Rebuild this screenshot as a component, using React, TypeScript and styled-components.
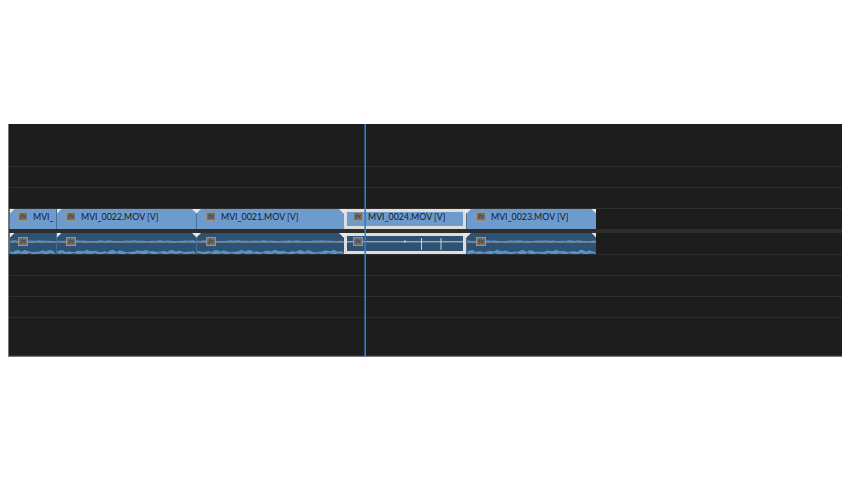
import React from 'react';
import styled, { createGlobalStyle } from 'styled-components';

const GlobalStyle = createGlobalStyle`
  html, body {
    margin: 0;
    padding: 0;
    background: #fff;
    font-family: "Liberation Sans", Arial, sans-serif;
  }
`;

const Page = styled.div`
  width: 850px;
  height: 480px;
  padding: 124px 8px 0;
  box-sizing: border-box;
`;

const Timeline = styled.div`
  position: relative;
  width: 834px;
  height: 232px;
  box-sizing: border-box;
  background: #1d1d1d;
  border-left: 1px solid #777;
  display: flex;
  flex-direction: column;
`;

const Track = styled.div<{ $h: number }>`
  height: ${(p) => p.$h}px;
  flex: none;
  box-sizing: border-box;
  border-bottom: 1px solid #2e2e2e;
  display: flex;
`;

const VideoTrack = styled(Track)`
  border-bottom: none;
`;

const Divider = styled.div`
  height: 4px;
  flex: none;
  background: #2d2d2d;
`;

const Clip = styled.div<{ $w: number; $selected?: boolean }>`
  position: relative;
  width: ${(p) => p.$w}px;
  flex: none;
  box-sizing: border-box;
  display: flex;
  align-items: flex-start;
  border-left: 1px solid #4a6f96;
  padding-left: ${(p) => (p.$selected ? 6 : 9)}px;
  ${(p) => p.$selected && 'border: 3px solid #e0dedb;'}

  &:first-child {
    padding-left: 8px;
  }
`;

const VideoClip = styled(Clip)`
  background: #6e9bce;
  gap: 5px;
  height: 20px;
  padding-top: ${(p) => (p.$selected ? 0 : 3)}px;
`;

const AudioClip = styled(Clip)`
  background: #2f5273;
  height: 21px;
  padding-top: ${(p) => (p.$selected ? 1 : 4)}px;
`;

const Label = styled.span`
  font-family: Lato, "Liberation Sans", sans-serif;
  font-size: 8.8px;
  line-height: 9px;
  color: #0e1a28;
  white-space: nowrap;
`;

const FxBadge = styled.span`
  position: relative;
  z-index: 2;
  flex: none;
  box-sizing: border-box;
  width: 10px;
  height: 9px;
  background: #6f6f6f;
  border: 1px solid #949494;
  color: #2e2e2e;
  font-family: "Liberation Serif", serif;
  font-size: 7px;
  font-style: italic;
  line-height: 7px;
  text-align: center;
  overflow: hidden;
`;

const Notch = styled.svg<{ $side: 'left' | 'right' | 'center'; $selected?: boolean }>`
  position: absolute;
  top: ${(p) => (p.$selected ? -3 : 0)}px;
  z-index: 3;
  ${(p) =>
    p.$side === 'left'
      ? 'left: 0;'
      : p.$side === 'right'
        ? 'right: 0;'
        : `left: ${p.$selected ? -8 : -5}px;`}
`;

const Wave = styled.svg`
  position: absolute;
  left: 0;
  top: 0;
  width: 100%;
  height: 100%;
`;

const Playhead = styled.div`
  position: absolute;
  left: 356px;
  top: 0;
  bottom: 0;
  width: 1px;
  background: #2f7bd6;
  box-shadow: -1px 0 0 rgba(47, 123, 214, 0.6);
  z-index: 5;
`;

const BottomEdge = styled.div`
  position: absolute;
  left: -1px;
  right: 0;
  bottom: -1px;
  height: 1px;
  background: #7c7c7c;
`;

const clips = [
  { name: 'MVI_', width: 47 },
  { name: 'MVI_0022.MOV [V]', width: 140 },
  { name: 'MVI_0021.MOV [V]', width: 148 },
  { name: 'MVI_0024.MOV [V]', width: 122, selected: true },
  { name: 'MVI_0023.MOV [V]', width: 130 },
];

const wavePath = (width: number, base: number, seed: number, amp: number) => {
  let d = `M0 ${base}`;
  for (let x = 0; x <= width; x += 3) {
    const up = 0.4 + Math.abs(Math.sin(x * 0.37 + seed) * Math.cos(x * 0.11 + seed)) * amp;
    d += ` L${x} ${(base - up).toFixed(1)}`;
  }
  for (let x = width; x >= 0; x -= 3) {
    const down = 0.4 + Math.abs(Math.cos(x * 0.29 + seed)) * amp * 0.6;
    d += ` L${x} ${(base + down).toFixed(1)}`;
  }
  return `${d} Z`;
};

const Triangle = ({ side, selected }: { side: 'left' | 'right' | 'center'; selected?: boolean }) => {
  if (side === 'left') {
    return (
      <Notch $side="left" width="5" height="5" viewBox="0 0 5 5">
        <path d="M0 0H4.5L0 4.5Z" fill="#e8e8e8" />
      </Notch>
    );
  }
  if (side === 'right') {
    return (
      <Notch $side="right" width="5" height="5" viewBox="0 0 5 5">
        <path d="M0.5 0H5V4.5Z" fill="#e8e8e8" />
      </Notch>
    );
  }
  return (
    <Notch $side="center" $selected={selected} width="9" height="5" viewBox="0 0 9 5">
      <path d="M0 0H9L4.5 4.5Z" fill="#e8e8e8" />
    </Notch>
  );
};

const Marks = ({ index, selected }: { index: number; selected?: boolean }) => (
  <>
    {index < 2 && <Triangle side="left" />}
    {index >= 2 && <Triangle side="center" selected={selected} />}
    {index === 4 && <Triangle side="right" />}
  </>
);

const App = () => (
  <Page>
    <GlobalStyle />
    <Timeline>
      <Track $h={43} />
      <Track $h={21} />
      <Track $h={21} />
      <VideoTrack $h={20}>
        {clips.map((c, i) => (
          <VideoClip key={c.name} $w={c.width} $selected={c.selected}>
            <Marks index={i} selected={c.selected} />
            <FxBadge>fx</FxBadge>
            <Label>{c.name}</Label>
          </VideoClip>
        ))}
      </VideoTrack>
      <Divider />
      <Track $h={22}>
        {clips.map((c, i) => (
          <AudioClip key={c.name} $w={c.width} $selected={c.selected}>
            {c.selected ? (
              <Wave viewBox={`0 0 ${c.width - 6} 15`} preserveAspectRatio="none">
                <rect x="0" y="5" width={c.width - 6} height="1.4" fill="#a0a8ae" />
                <path d="M58 4V7M74.5 2V14M94 2V14" stroke="#c8d2dc" strokeWidth="1" />
              </Wave>
            ) : (
              <Wave viewBox={`0 0 ${c.width} 21`} preserveAspectRatio="none">
                <path d={wavePath(c.width, 8.5, i, 1.4)} fill="#5f97cf" opacity="0.6" />
                <rect x="0" y="8.5" width={c.width} height="1" fill="#8d9aa6" />
                <path d={wavePath(c.width, 19.5, i + 2, 2.4)} fill="#5f9fd8" opacity="0.85" />
              </Wave>
            )}
            <Marks index={i} selected={c.selected} />
            <FxBadge>fx</FxBadge>
          </AudioClip>
        ))}
      </Track>
      <Track $h={21} />
      <Track $h={21} />
      <Track $h={21} />
      <Track $h={38} />
      <Playhead />
      <BottomEdge />
    </Timeline>
  </Page>
);

export default App;
